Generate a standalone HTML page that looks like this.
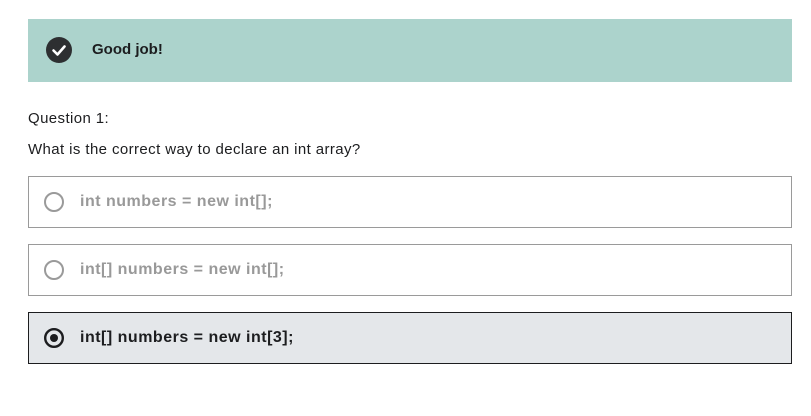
<!DOCTYPE html><html><head><style>
body{margin:0;width:811px;height:416px;background:#fff;font-family:"Liberation Sans",sans-serif;position:relative;overflow:hidden}
.ban{position:absolute;left:28px;top:19px;width:764px;height:63px;background:#acd3cc}
.ban svg{position:absolute;left:18px;top:18px}
.ban b{position:absolute;left:64px;top:22px;font-size:15px;color:#1c1d1f}
.t{position:absolute;left:28px;font-size:15px;color:#1c1d1f;letter-spacing:.4px}
.o{position:absolute;left:28px;width:762px;height:50px;border:1px solid #9a9a9a;box-sizing:content-box}
.o svg{position:absolute;left:15px;top:15px}
.o span{position:absolute;left:51px;top:16px;font-size:16px;letter-spacing:.5px;font-weight:bold;color:#999}
.sel{background:#e4e7ea;border-color:#1c1d1f}
.sel span{color:#1c1d1f}
</style></head><body>
<div class="ban"><svg width="26" height="26" viewBox="0 0 26 26"><circle cx="13" cy="13" r="13" fill="#2d2f31"/><path d="M7.5 13.5l4 4 7-8" stroke="#fff" stroke-width="2.6" fill="none" stroke-linecap="round" stroke-linejoin="round"/></svg><b>Good job!</b></div>
<div class="t" style="top:110px">Question 1:</div>
<div class="t" style="top:141px">What is the correct way to declare an int array?</div>
<div class="o" style="top:176px"><svg width="20" height="20"><circle cx="10" cy="10" r="9" fill="none" stroke="#9a9a9a" stroke-width="2"/></svg><span>int numbers = new int[];</span></div>
<div class="o" style="top:244px"><svg width="20" height="20"><circle cx="10" cy="10" r="9" fill="none" stroke="#9a9a9a" stroke-width="2"/></svg><span>int[] numbers = new int[];</span></div>
<div class="o sel" style="top:312px"><svg width="20" height="20"><circle cx="10" cy="10" r="8.8" fill="none" stroke="#1c1d1f" stroke-width="2.4"/><circle cx="10" cy="10" r="4" fill="#1c1d1f"/></svg><span>int[] numbers = new int[3];</span></div>
</body></html>
